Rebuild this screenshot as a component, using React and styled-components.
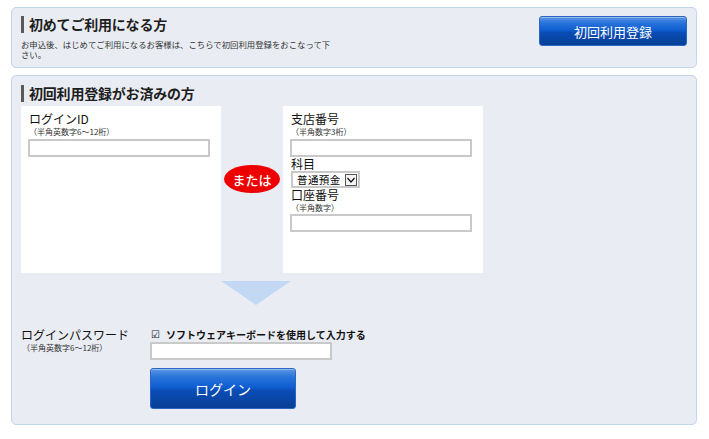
import React from "react";
import styled, { createGlobalStyle } from "styled-components";

const GlobalStyle = createGlobalStyle`
  html, body {
    margin: 0;
    padding: 0;
    background: #ffffff;
  }
  body {
    font-family: "Noto Sans CJK JP", "Noto Sans", sans-serif;
    color: #222;
  }
  * {
    box-sizing: border-box;
  }
`;

export const Page = styled.div`
  width: 709px;
  padding: 7px 12px 0 11px;
  display: flex;
  flex-direction: column;
  gap: 7px;
`;

export const Panel = styled.section`
  background: #e9ecf2;
  border: 1px solid #c2d5ef;
  border-radius: 5px;
  padding: ${(p) => p.$pad || "8px 9px 8px 9px"};
`;

export const TopRow = styled.div`
  display: flex;
  justify-content: space-between;
  align-items: flex-start;
`;

export const Heading = styled.h2`
  margin: 0;
  height: 17px;
  display: flex;
  align-items: center;
  gap: 5px;
  font-size: 14px;
  font-weight: bold;
  line-height: 17px;
  color: #1e1e1e;
  letter-spacing: -0.2px;

  &::before {
    content: "";
    display: block;
    width: 3px;
    height: 17px;
    background: #5a5a5a;
  }
`;

export const Desc = styled.p`
  margin: 6px 0 0;
  max-width: 316px;
  font-size: 8.4px;
  line-height: 10px;
  color: #333;
`;

export const BlueButton = styled.button`
  width: ${(p) => p.$w}px;
  height: ${(p) => p.$h}px;
  border: 1px solid #2a66c4;
  border-radius: 3px;
  background: linear-gradient(
    #5c97e4 0%,
    #2b74db 20%,
    #0d5ccf 48%,
    #0a4db6 55%,
    #083f95 100%
  );
  box-shadow: inset 0 1px 0 rgba(255, 255, 255, 0.35);
  color: #fff;
  font-family: "Noto Sans CJK JP", sans-serif;
  font-size: ${(p) => p.$fs}px;
  padding: 0;
  cursor: pointer;
  margin-top: ${(p) => p.$mt || 0}px;
`;

export const Boxes = styled.div`
  display: flex;
  align-items: flex-start;
  margin-top: 4px;
`;

export const WhiteBox = styled.div`
  width: 200px;
  height: 167px;
  background: #fff;
  padding: 6px 0 0 7px;
  display: flex;
  flex-direction: column;
`;

export const Label = styled.div`
  font-size: 12px;
  line-height: 14px;
  color: #111;
  white-space: nowrap;
  padding-left: ${(p) => p.$indent ?? 1}px;
`;

export const Note = styled.div`
  font-size: 8px;
  line-height: 12px;
  color: #333;
  white-space: nowrap;
  padding-left: 1px;
  margin-bottom: ${(p) => p.$mb || 0}px;
`;

export const TextInput = styled.input`
  width: 182px;
  height: 18px;
  border: 2px solid #c9c9c9;
  background: #fff;
  padding: 0 3px;
  outline: none;
  flex: none;
`;

export const Or = styled.div`
  width: 56px;
  height: 28px;
  margin: 59px 3px 0 3px;
  border-radius: 50%;
  background: #ee0000;
  color: #fff;
  font-size: 13px;
  font-weight: 500;
  display: flex;
  align-items: center;
  justify-content: center;
`;

export const SelectBox = styled.div`
  display: inline-flex;
  align-items: center;
  justify-content: space-between;
  align-self: flex-start;
  width: 69px;
  height: 17px;
  border: 2px solid #c9c9c9;
  background: #fff;
  margin-left: 1px;
  padding: 0 1px 0 4px;
  white-space: nowrap;
`;

export const SelectText = styled.span`
  font-size: 10.5px;
  letter-spacing: 0.4px;
  line-height: 13px;
  color: #000;
`;

export const ArrowBox = styled.span`
  width: 12px;
  height: 12px;
  flex: none;
  border: 1px solid #555;
  background: #f4f4f4;
  display: flex;
  align-items: center;
  justify-content: center;
`;

export const Triangle = styled.div`
  margin: 8px 0 0 200px;
  width: 0;
  height: 0;
  border-left: 35px solid transparent;
  border-right: 35px solid transparent;
  border-top: 24px solid #c3d8f3;
`;

export const PassRow = styled.div`
  display: flex;
  margin-top: 22px;
`;

export const PassLabel = styled.div`
  width: 129px;
  padding-top: 1px;
`;

export const PassCol = styled.div`
  display: flex;
  flex-direction: column;
`;

export const Check = styled.div`
  display: flex;
  align-items: center;
  gap: 6px;
  height: 14px;
  font-size: 10px;
  font-weight: bold;
  color: #111;
  padding-left: 1px;
  margin-bottom: 1px;

  span {
    font-family: "DejaVu Sans", sans-serif;
    font-weight: normal;
    font-size: 10px;
  }
`;

function Chevron() {
  return (
    <svg width="8" height="6" viewBox="0 0 8 6">
      <path d="M0.5 1 L4 5 L7.5 1" fill="none" stroke="#111" strokeWidth="1.2" />
    </svg>
  );
}

export default function App() {
  return (
    <>
      <GlobalStyle />
      <Page>
        <Panel $pad="8px 9px 8px 9px">
          <TopRow>
            <div>
              <Heading>初めてご利用になる方</Heading>
              <Desc>
                お申込後、はじめてご利用になるお客様は、こちらで初回利用登録をおこなって下さい。
              </Desc>
            </div>
            <BlueButton $w={148} $h={30} $fs={13}>
              初回利用登録
            </BlueButton>
          </TopRow>
        </Panel>

        <Panel $pad="9px 9px 15px 9px">
          <Heading>初回利用登録がお済みの方</Heading>
          <Boxes>
            <WhiteBox>
              <Label>ログインID</Label>
              <Note $mb={1}>（半角英数字6～12桁）</Note>
              <TextInput />
            </WhiteBox>
            <Or>または</Or>
            <WhiteBox>
              <Label>支店番号</Label>
              <Note $mb={1}>（半角数字3桁）</Note>
              <TextInput />
              <Label>科目</Label>
              <SelectBox>
                <SelectText>普通預金</SelectText>
                <ArrowBox>
                  <Chevron />
                </ArrowBox>
              </SelectBox>
              <Label>口座番号</Label>
              <Note>（半角数字）</Note>
              <TextInput />
            </WhiteBox>
          </Boxes>
          <Triangle />
          <PassRow>
            <PassLabel>
              <Label $indent={0}>ログインパスワード</Label>
              <Note>（半角英数字6～12桁）</Note>
            </PassLabel>
            <PassCol>
              <Check>
                <span>☑</span>ソフトウェアキーボードを使用して入力する
              </Check>
              <TextInput />
              <BlueButton $w={146} $h={41} $fs={14} $mt={8}>
                ログイン
              </BlueButton>
            </PassCol>
          </PassRow>
        </Panel>
      </Page>
    </>
  );
}
